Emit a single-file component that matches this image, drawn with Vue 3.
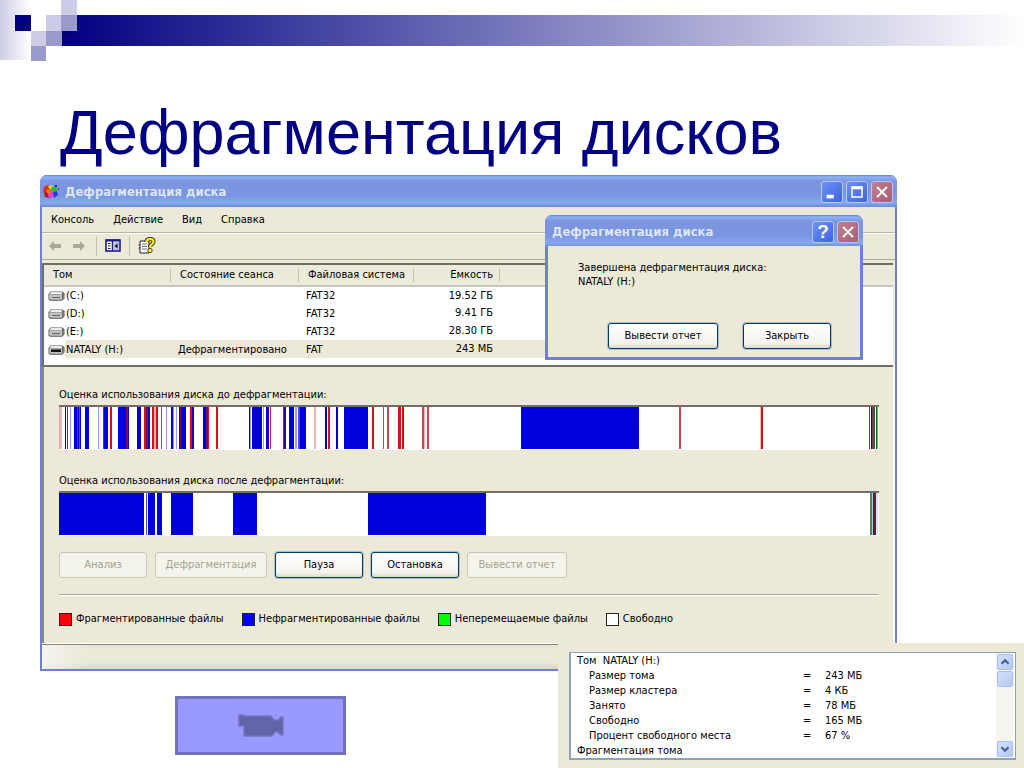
<script setup>
const menu = ['Консоль', 'Действие', 'Вид', 'Справка']

const volumes = [
  { name: '(C:)', state: '', fs: 'FAT32', size: '19.52 ГБ' },
  { name: '(D:)', state: '', fs: 'FAT32', size: '9.41 ГБ' },
  { name: '(E:)', state: '', fs: 'FAT32', size: '28.30 ГБ' },
  { name: 'NATALY (H:)', state: 'Дефрагментировано', fs: 'FAT', size: '243 МБ', selected: true },
]

const B = '#0000dc'
const L = '#9a9af2'
const M = '#4a4ae6'
const R = '#d80f14'
const D = '#7d0a58'
const P = '#f9b4b4'
const O = '#c9474a'

/* each stripe: start, width, colour on a scale of 820 units */
const before = [
  [0, 1, '#c9b0a8'], [1, 2, P], [6, 1, B], [8, 1, R], [11, 1, L],
  [15, 7, B], [18, 1, '#5a2ab0'], [20, 1, M], [26, 4, B], [39, 1, L],
  [44, 1, R], [45, 4, B], [51, 2, R],
  [59, 11, B], [67, 2, '#8c0a50'], [78, 4, B],
  [85, 2, R], [87, 2, D], [89, 2, B], [93, 2, R], [95, 2, P], [97, 2, R],
  [102, 1, '#6a4ac8'], [107, 1, L], [112, 2, B], [114, 1, L], [117, 1, L],
  [120, 7, B], [121, 1, D], [131, 2, R], [133, 2, B],
  [144, 3, B], [147, 2, D], [149, 1, R], [157, 2, R],
  [190, 1, B], [191, 1, L], [193, 10, B], [204, 1, L], [207, 3, B], [211, 1, R],
  [224, 1, R], [225, 2, '#2a0a90'], [230, 5, B], [236, 2, L], [239, 2, M], [241, 6, B],
  [255, 2, P], [266, 2, B], [269, 2, R], [277, 2, B],
  [285, 24, B], [313, 2, R], [324, 1, O], [328, 2, O],
  [339, 3, R], [343, 2, R], [363, 2, O], [365, 1, P], [368, 2, O],
  [462, 118, B], [620, 2, O], [701, 1, P], [702, 2, R],
  [810, 1, R], [812, 1, B], [813, 3, '#6b4650'], [817, 1, '#0a6a20'], [818, 1, '#35d45a'],
]
const after = [
  [0, 85, B], [87, 1, M], [89, 7, B], [98, 5, B], [112, 22, B], [174, 24, B], [309, 118, B],
  [811, 2, '#66813e'], [813, 1, '#8fe0f0'], [814, 1, '#202080'], [815, 2, '#80103c'], [817, 2, '#c8f5cc'],
]
const charts = [
  { label: 'Оценка использования диска до дефрагментации:', stripes: before },
  { label: 'Оценка использования диска после дефрагментации:', stripes: after },
]

const actions = [
  { text: 'Анализ', disabled: true, size: 'w88' },
  { text: 'Дефрагментация', disabled: true, size: 'w112' },
  { text: 'Пауза', disabled: false, size: 'w88' },
  { text: 'Остановка', disabled: false, size: 'w88' },
  { text: 'Вывести отчет', disabled: true, size: 'w100' },
]

const legend = [
  { text: 'Фрагментированные файлы', cls: 'red' },
  { text: 'Нефрагментированные файлы', cls: 'blue' },
  { text: 'Неперемещаемые файлы', cls: 'green' },
  { text: 'Свободно', cls: 'white' },
]

const report = [
  ['Размер тома', '243 МБ'],
  ['Размер кластера', '4 КБ'],
  ['Занято', '78 МБ'],
  ['Свободно', '165 МБ'],
  ['Процент свободного места', '67 %'],
]
</script>

<template>
  <main class="slide">
    <div class="band">
      <svg class="squares" viewBox="0 0 80 62" aria-hidden="true">
        <defs>
          <linearGradient id="fade" x1="0" x2="1" y1="0" y2="0">
            <stop offset="0" stop-color="#cdcde6" />
            <stop offset="1" stop-color="#ffffff" />
          </linearGradient>
        </defs>
        <rect x="0" y="0" width="31" height="60" fill="url(#fade)" />
        <rect x="31" y="0" width="30" height="31" fill="#fff" />
        <rect x="46" y="0" width="16" height="46" fill="#fff" />
        <rect x="15" y="15" width="16" height="16" fill="#000080" />
        <rect x="61" y="0" width="16" height="15" fill="#cccce6" />
        <rect x="61" y="15" width="16" height="16" fill="#9999cc" />
        <rect x="46" y="15" width="15" height="16" fill="#cccce6" />
        <rect x="46" y="31" width="16" height="15" fill="#9999cc" />
        <rect x="31" y="31" width="15" height="15" fill="#cccce6" />
        <rect x="31" y="46" width="15" height="15" fill="#9999cc" />
      </svg>
      <div class="stripe"></div>
    </div>

    <h1>Дефрагментация дисков</h1>

    <section class="window" aria-label="Дефрагментация диска">
      <header class="caption">
        <svg class="appicon" viewBox="0 0 18 18" aria-hidden="true">
          <path d="M2 4l4-2 3 2v5l-4 2-4-2z" fill="#e8281e" />
          <path d="M6 3l4-1 1 3-3 2z" fill="#f6d21c" />
          <path d="M9 5l4-2 3 3-3 3-4-1z" fill="#38b838" />
          <path d="M2 9l4 1 1 5-4-1z" fill="#b81818" />
          <path d="M6 9l4-1 2 4-4 4-2-3z" fill="#e83cd0" />
          <path d="M11 9l4-1 1 4-4 3z" fill="#2040d8" />
          <path d="M4 7l3-1 2 3-3 2z" fill="#fb7c18" />
          <rect x="13" y="2" width="2" height="2" fill="#182880" />
          <rect x="16" y="5" width="1" height="2" fill="#c02020" />
        </svg>
        <span class="captext">Дефрагментация диска</span>
        <div class="ctrls">
          <button class="ctl" aria-label="Свернуть"><svg viewBox="0 0 22 22"><rect x="5" y="14" width="8" height="4" fill="#fff" /></svg></button>
          <button class="ctl" aria-label="Развернуть"><svg viewBox="0 0 22 22"><path d="M5.500 5.500h11v11h-11z" fill="none" stroke="#fff" stroke-width="1.600" /><path d="M4.700 6.500h12.600" stroke="#fff" stroke-width="3" /></svg></button>
          <button class="ctl close" aria-label="Закрыть окно"><svg viewBox="0 0 22 22"><path d="M5.500 5.500l11 11M16.500 5.500l-11 11" stroke="#fff" stroke-width="2.200" /></svg></button>
        </div>
      </header>

      <div class="client">
        <nav class="menubar">
          <button v-for="m in menu" :key="m">{{ m }}</button>
        </nav>
        <div class="toolbar">
          <button aria-label="Назад"><svg viewBox="0 0 14 12"><path d="M1 6l5-5v3h7v4H6v3z" fill="#aaa89a" /></svg></button>
          <button aria-label="Вперед"><svg viewBox="0 0 14 12"><path d="M13 6L8 1v3H1v4h7v3z" fill="#aaa89a" /></svg></button>
          <i class="vr"></i>
          <button class="wide" aria-label="Дерево консоли">
            <svg viewBox="0 0 16 13">
              <rect x="1" y="1" width="14" height="11" fill="#fff" stroke="#1a1a8c" stroke-width="1.600" />
              <path d="M1 1.500h14" stroke="#1a1a8c" stroke-width="2" />
              <path d="M7.500 2v10" stroke="#1a1a8c" stroke-width="1.500" />
              <path d="M3 4.500h2.500M3 7h2.500M3 9.500h2.500" stroke="#222" />
              <rect x="8.500" y="3" width="5.500" height="8" fill="#b8c0e8" />
              <path d="M12.500 4.500v5L9.500 7z" fill="#111" />
            </svg>
          </button>
          <i class="vr"></i>
          <button class="help" aria-label="Справка по программе">
            <svg viewBox="0 0 18 18">
              <path d="M2 4h9v12H2z" fill="#fff" stroke="#222" />
              <path d="M4 7h5M4 9.500h5M4 12h5" stroke="#667" />
              <path d="M0.500 8h2M0.500 11h2" stroke="#444" />
              <path d="M8.500 5c0-4 7-4 7-0.500 0 3-3.500 2.500-3.500 5.500" fill="none" stroke="#222" stroke-width="4" />
              <path d="M8.500 5c0-4 7-4 7-0.500 0 3-3.500 2.500-3.500 5.500" fill="none" stroke="#f8e814" stroke-width="2.400" />
              <circle cx="12" cy="13.500" r="2.200" fill="#f8e814" stroke="#222" stroke-width="0.800" />
            </svg>
          </button>
        </div>

        <div class="list">
          <table>
            <colgroup><col class="c1" /><col class="c2" /><col class="c3" /><col class="c4" /><col /></colgroup>
            <thead>
              <tr><th>Том</th><th>Состояние сеанса</th><th>Файловая система</th><th class="num">Емкость</th><th></th></tr>
            </thead>
            <tbody>
              <tr v-for="v in volumes" :key="v.name" :class="{ sel: v.selected }">
                <td class="vol">
                  <div class="volbox">
                    <svg viewBox="0 0 17 10" aria-hidden="true">
                      <path d="M2.500 0.500h11.500l2.500 1.500v5.500L14 9.800H2L0.500 8.500V3z" fill="#555" />
                      <path d="M3 1h10.500l1 2H1.500z" fill="#ececec" />
                      <path d="M1.200 3.300h13v5.500H2.200l-1-1z" fill="#c2c2c2" />
                      <path d="M14.500 3l1.500-0.800v5l-1.500 1.500z" fill="#777" />
                      <rect v-if="v.selected" x="3" y="4.500" width="10" height="2.500" fill="#111" />
                      <path v-else d="M4 6.500h8" stroke="#666" />
                    </svg>
                    <span>{{ v.name }}</span>
                  </div>
                </td>
                <td>{{ v.state }}</td>
                <td>{{ v.fs }}</td>
                <td class="num">{{ v.size }}</td>
                <td class="rest"></td>
              </tr>
            </tbody>
          </table>
        </div>

        <div class="panel">
          <figure v-for="c in charts" :key="c.label">
            <figcaption>{{ c.label }}</figcaption>
            <svg class="bar" viewBox="0 0 820 43" preserveAspectRatio="none" shape-rendering="crispEdges" aria-hidden="true">
              <rect v-for="(s, i) in c.stripes" :key="i" :x="s[0]" y="0" :width="s[1]" height="42" :fill="s[2]" />
            </svg>
          </figure>
          <div class="actions">
            <button v-for="a in actions" :key="a.text" class="btn" :class="a.size" :disabled="a.disabled">{{ a.text }}</button>
          </div>
          <hr />
          <ul class="legend">
            <li v-for="l in legend" :key="l.text"><i :class="l.cls"></i>{{ l.text }}</li>
          </ul>
        </div>
        <footer class="status"></footer>
      </div>

      <section class="dialog" role="dialog" aria-label="Завершение дефрагментации">
        <header class="caption small">
          <span class="captext">Дефрагментация диска</span>
          <div class="ctrls">
            <button class="ctl" aria-label="Подсказка">?</button>
            <button class="ctl close" aria-label="Закрыть сообщение"><svg viewBox="0 0 22 22"><path d="M5.500 5.500l11 11M16.500 5.500l-11 11" stroke="#fff" stroke-width="2.200" /></svg></button>
          </div>
        </header>
        <div class="dlgbody">
          <p>Завершена дефрагментация диска:<br />NATALY (H:)</p>
          <div class="dlgbtns">
            <button class="btn w110">Вывести отчет</button>
            <button class="btn w88">Закрыть</button>
          </div>
        </div>
      </section>
    </section>

    <button class="video" aria-label="Показать видео">
      <svg viewBox="0 0 46 24" aria-hidden="true">
        <path d="M1 1h4l2 1h26l3 4h4l3-3h2v18h-2l-3-3h-3l-3 4H6V12H1z" fill="#6464a8" stroke="#7676be" stroke-width="1.500" stroke-linejoin="round" />
      </svg>
    </button>

    <section class="report" aria-label="Отчет">
      <div class="repbox">
        <div class="reptext">
          <p>Том&nbsp; NATALY (H:)</p>
          <dl>
            <div v-for="r in report" :key="r[0]"><dt>{{ r[0] }}</dt><dd><span>=</span>{{ r[1] }}</dd></div>
          </dl>
          <p>Фрагментация тома</p>
        </div>
        <div class="scroll">
          <button aria-label="Вверх"><svg viewBox="0 0 16 16"><path d="M4 10l4-4 4 4" fill="none" stroke="#43618f" stroke-width="2.600" /></svg></button>
          <div class="thumb"></div>
          <button class="down" aria-label="Вниз"><svg viewBox="0 0 16 16"><path d="M4 6l4 4 4-4" fill="none" stroke="#43618f" stroke-width="2.600" /></svg></button>
        </div>
      </div>
    </section>
  </main>
</template>

<style>
body {
  margin: 0;
  background: #fff;
}
</style>

<style scoped>
* {
  box-sizing: border-box;
}
.slide {
  position: relative;
  min-height: 100vh;
  overflow: hidden;
  font-family: "DejaVu Sans Condensed", "DejaVu Sans", sans-serif;
  font-size: 11px;
  line-height: 14px;
  color: #000;
}
button {
  font: inherit;
  color: inherit;
  padding: 0;
  border: 0;
  background: none;
}
svg {
  display: block;
}
.band {
  display: flex;
  height: 62px;
}
.squares {
  width: 80px;
  height: 62px;
  flex: none;
  position: relative;
}
.stripe {
  flex: 1;
  height: 31px;
  margin: 15px 0 0 -18px;
  background: linear-gradient(to right, #000080, #fff);
}
h1 {
  margin: 34px 0 7px 60px;
  font: 400 63px/72px "Liberation Sans", Arial, sans-serif;
  color: #000080;
  white-space: nowrap;
}
.window {
  position: relative;
  margin: 0 127px 0 40px;
  border: 2px solid #6f7fd6;
  border-top: 0;
  border-radius: 7px 7px 0 0;
  background: #7c98e2;
}
.caption {
  display: flex;
  align-items: center;
  height: 32px;
  padding: 2px 4px 0 1px;
  margin: 0 -2px;
  border-radius: 7px 7px 0 0;
  background: linear-gradient(to bottom, #5a7edc 0, #8fb2f4 2px, #7c96e2 6px, #7a94df 20px, #86a9ee 28px, #6a88de 32px);
}
.appicon {
  width: 18px;
  height: 18px;
  margin: 0 5px 0 1px;
}
.captext {
  flex: 1;
  font-size: 13px;
  font-weight: 700;
  line-height: 16px;
  color: #dbe6fb;
  white-space: nowrap;
}
.ctrls {
  display: flex;
  gap: 3px;
}
.ctl {
  width: 22px;
  height: 22px;
  border: 1px solid #b4c8f6;
  border-radius: 3px;
  background: linear-gradient(135deg, #6f92f2, #3d62e6);
  color: #fff;
  font: 700 19px/20px "Liberation Sans", sans-serif;
}
.ctl svg {
  width: 20px;
  height: 20px;
}
.ctl.close {
  background: linear-gradient(135deg, #c08090, #aa5c72);
}
.client {
  background: #ece9d8;
}
.menubar {
  display: flex;
  gap: 19px;
  height: 26px;
  padding: 0 9px;
  border-bottom: 1px solid #bab6a6;
  align-items: center;
}
.toolbar {
  display: flex;
  align-items: center;
  height: 27px;
  padding: 0 6px 2px;
  border-top: 1px solid #fff;
  border-bottom: 1px solid #aaa696;
}
.toolbar button {
  width: 14px;
  margin-right: 10px;
}
.toolbar .wide {
  width: 16px;
  margin-right: 8px;
}
.toolbar .help {
  width: 18px;
}
.vr {
  width: 1px;
  height: 20px;
  margin-right: 8px;
  background: #c6c2b0;
}
.list {
  margin: 3px 2px 0 0;
  border: 2px solid #716f64;
  border-width: 2px 0 2px 2px;
  background: #fff;
  height: 104px;
}
table {
  width: 100%;
  table-layout: fixed;
  border-collapse: collapse;
}
.c1 { width: 127px; }
.c2 { width: 128px; }
.c3 { width: 115px; }
.c4 { width: 86px; }
th {
  height: 21px;
  padding: 0 0 0 9px;
  text-align: left;
  font-weight: 400;
  background: linear-gradient(#c6c2b0, #c6c2b0) right 3px / 1px 14px no-repeat, #ebeadb;
  border-bottom: 2px solid #cbc7b8;
  white-space: nowrap;
}
th:last-child {
  background: #ebeadb;
}
td {
  height: 18px;
  padding: 1px 0 0 7px;
  white-space: nowrap;
}
.num {
  text-align: right;
  padding: 0 7px 0 0;
}
td.vol {
  padding: 1px 0 0 4px;
}
.volbox {
  display: flex;
  align-items: center;
  gap: 1px;
}
.volbox svg {
  width: 17px;
  height: 10px;
}
.sel td {
  background: #ece9d8;
}
.sel td.vol {
  background: linear-gradient(to right, #fff 21px, #ece9d8 21px);
}
.sel td.rest {
  background: linear-gradient(to right, #ece9d8 100px, #fff 100px);
}
.panel {
  padding: 21px 14px 17px 15px;
  border-left: 2px solid #8c897c;
  border-right: 2px solid #fff;
}
figure {
  margin: 0;
}
figure + figure {
  margin-top: 24px;
}
figcaption {
  margin-bottom: 3px;
}
.bar {
  width: 100%;
  height: 45px;
  border-top: 2px solid #716f64;
  background: #fff;
}
.actions {
  display: flex;
  gap: 8px;
  margin-top: 16px;
}
.btn {
  height: 26px;
  border: 1px solid #003c74;
  border-radius: 3px;
  background: linear-gradient(#fff, #f4f3ee 80%, #dcd8cc);
  box-shadow: 0 0 0 1px rgba(0, 60, 116, 0.25);
  white-space: nowrap;
}
.btn:disabled {
  border-color: #c9c7ba;
  background: #f5f4ea;
  color: #a5a293;
  box-shadow: none;
}
.w88 { width: 88px; }
.w100 { width: 100px; }
.w110 { width: 110px; }
.w112 { width: 112px; }
hr {
  margin: 16px 0;
  border: 0;
  border-top: 1px solid #aca899;
  border-bottom: 1px solid #fff;
}
.legend {
  display: flex;
  gap: 18px;
  margin: 0;
  padding: 0;
  list-style: none;
  white-space: nowrap;
}
.legend li {
  display: flex;
  align-items: center;
  gap: 4px;
}
.legend i {
  width: 13px;
  height: 13px;
  border: 1px solid #222;
}
.red { background: #f00; }
.blue { background: #00f; }
.green { background: #0f0; }
.white { background: #fff; }
.status {
  height: 26px;
  border-top: 1px solid #fff;
  background: linear-gradient(#8c897c, #8c897c) top / 100% 1px no-repeat, linear-gradient(to right, rgba(245, 245, 242, 0.9), rgba(236, 233, 216, 0) 50px), linear-gradient(#e4e0d0, #ece9d8 6px, #ece9d8 18px, #d8d5c4);
}
.dialog {
  position: absolute;
  top: 40px;
  right: 32px;
  width: 318px;
  border: 3px solid #6c80d8;
  border-top: 0;
  border-radius: 7px 7px 0 0;
  background: #ece9d8;
}
.small {
  height: 31px;
  margin: 0 -3px;
  padding-left: 7px;
}
.dlgbody {
  padding: 15px 29px 8px 30px;
}
.dlgbody p {
  margin: 0 0 34px;
}
.dlgbtns {
  display: flex;
  justify-content: flex-end;
  gap: 25px;
}
.video {
  display: flex;
  align-items: center;
  justify-content: center;
  width: 171px;
  height: 59px;
  margin: 25px 0 14px 175px;
  border: 3px solid #7373b9;
  background: #9999ff;
}
.video svg {
  width: 46px;
  height: 24px;
}
.report {
  position: absolute;
  right: 0;
  bottom: 0;
  width: 466px;
  padding: 9px 8px 9px 11px;
  background: #ece9d8;
}
.repbox {
  display: flex;
  justify-content: space-between;
  border: 2px solid #8fa3b8;
  border-width: 1px 1px 2px 2px;
  background: #fff;
}
.reptext {
  flex: 1;
  padding-left: 6px;
  line-height: 15px;
}
.reptext p,
dl,
dd {
  margin: 0;
}
dl > div {
  display: flex;
  padding-left: 12px;
}
dt {
  width: 214px;
}
dd span {
  display: inline-block;
  width: 22px;
}
.scroll {
  display: flex;
  flex-direction: column;
  gap: 1px;
  width: 18px;
  margin-right: 1px;
  padding: 1px;
  background: #f5f4ee;
}
.scroll button,
.thumb {
  height: 16px;
  border: 1px solid #a9bff5;
  border-radius: 2px;
  background: linear-gradient(135deg, #d4e0fc, #b4c8f6);
}
.scroll .down {
  margin-top: auto;
}
</style>
